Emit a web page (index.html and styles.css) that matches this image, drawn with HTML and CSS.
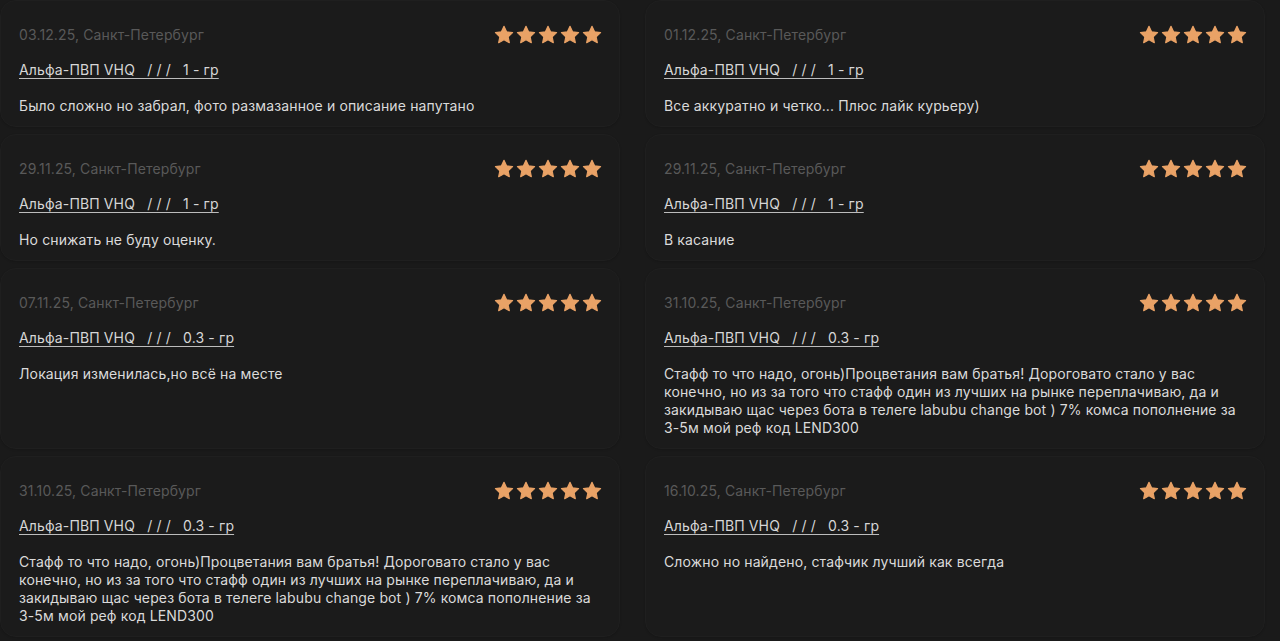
FILE: index.html
```html
<!DOCTYPE html>
<html lang="ru">
<head>
<meta charset="utf-8">
<link rel="stylesheet" href="styles.css">
<title>Отзывы</title>
</head>
<body>
<svg width="0" height="0" class="defs" aria-hidden="true">
  <defs>
    <symbol id="star" viewBox="0 0 24 24">
      <path d="M12 1.6l3.1 6.6 7.2.9-5.3 5 1.4 7.1L12 17.7l-6.4 3.5 1.4-7.1-5.3-5 7.2-.9z" fill="currentColor" stroke="currentColor" stroke-width="1.4" stroke-linejoin="round"/>
    </symbol>
  </defs>
</svg>
<main class="reviews">
  <article class="card">
    <div class="head"><span class="meta">03.12.25, Санкт-Петербург</span><span class="stars"><svg><use href="#star"/></svg><svg><use href="#star"/></svg><svg><use href="#star"/></svg><svg><use href="#star"/></svg><svg><use href="#star"/></svg></span></div>
    <a class="product" href="#">Альфа-ПВП VHQ   / / /   1 - гр</a>
    <p class="text">Было сложно но забрал, фото размазанное и описание напутано</p>
  </article>
  <article class="card">
    <div class="head"><span class="meta">01.12.25, Санкт-Петербург</span><span class="stars"><svg><use href="#star"/></svg><svg><use href="#star"/></svg><svg><use href="#star"/></svg><svg><use href="#star"/></svg><svg><use href="#star"/></svg></span></div>
    <a class="product" href="#">Альфа-ПВП VHQ   / / /   1 - гр</a>
    <p class="text">Все аккуратно и четко... Плюс лайк курьеру)</p>
  </article>
  <article class="card">
    <div class="head"><span class="meta">29.11.25, Санкт-Петербург</span><span class="stars"><svg><use href="#star"/></svg><svg><use href="#star"/></svg><svg><use href="#star"/></svg><svg><use href="#star"/></svg><svg><use href="#star"/></svg></span></div>
    <a class="product" href="#">Альфа-ПВП VHQ   / / /   1 - гр</a>
    <p class="text">Но снижать не буду оценку.</p>
  </article>
  <article class="card">
    <div class="head"><span class="meta">29.11.25, Санкт-Петербург</span><span class="stars"><svg><use href="#star"/></svg><svg><use href="#star"/></svg><svg><use href="#star"/></svg><svg><use href="#star"/></svg><svg><use href="#star"/></svg></span></div>
    <a class="product" href="#">Альфа-ПВП VHQ   / / /   1 - гр</a>
    <p class="text">В касание</p>
  </article>
  <article class="card">
    <div class="head"><span class="meta">07.11.25, Санкт-Петербург</span><span class="stars"><svg><use href="#star"/></svg><svg><use href="#star"/></svg><svg><use href="#star"/></svg><svg><use href="#star"/></svg><svg><use href="#star"/></svg></span></div>
    <a class="product" href="#">Альфа-ПВП VHQ   / / /   0.3 - гр</a>
    <p class="text">Локация изменилась,но всё на месте</p>
  </article>
  <article class="card">
    <div class="head"><span class="meta">31.10.25, Санкт-Петербург</span><span class="stars"><svg><use href="#star"/></svg><svg><use href="#star"/></svg><svg><use href="#star"/></svg><svg><use href="#star"/></svg><svg><use href="#star"/></svg></span></div>
    <a class="product" href="#">Альфа-ПВП VHQ   / / /   0.3 - гр</a>
    <p class="text">Стафф то что надо, огонь)Процветания вам братья! Дороговато стало у вас конечно, но из за того что стафф один из лучших на рынке переплачиваю, да и закидываю щас через бота в телеге labubu change bot ) 7% комса пополнение за 3-5м мой реф код LEND300</p>
  </article>
  <article class="card">
    <div class="head"><span class="meta">31.10.25, Санкт-Петербург</span><span class="stars"><svg><use href="#star"/></svg><svg><use href="#star"/></svg><svg><use href="#star"/></svg><svg><use href="#star"/></svg><svg><use href="#star"/></svg></span></div>
    <a class="product" href="#">Альфа-ПВП VHQ   / / /   0.3 - гр</a>
    <p class="text">Стафф то что надо, огонь)Процветания вам братья! Дороговато стало у вас конечно, но из за того что стафф один из лучших на рынке переплачиваю, да и закидываю щас через бота в телеге labubu change bot ) 7% комса пополнение за 3-5м мой реф код LEND300</p>
  </article>
  <article class="card">
    <div class="head"><span class="meta">16.10.25, Санкт-Петербург</span><span class="stars"><svg><use href="#star"/></svg><svg><use href="#star"/></svg><svg><use href="#star"/></svg><svg><use href="#star"/></svg><svg><use href="#star"/></svg></span></div>
    <a class="product" href="#">Альфа-ПВП VHQ   / / /   0.3 - гр</a>
    <p class="text">Сложно но найдено, стафчик лучший как всегда</p>
  </article>
</main>
</body>
</html>
```
FILE: styles.css
```css
html, body {
  margin: 0;
  padding: 0;
  background: #1a1a1a;
  height: 641px;
  overflow: hidden;
}

body {
  font-family: Inter, "Noto Sans", "DejaVu Sans", sans-serif;
  font-size: 14px;
  line-height: 18px;
  letter-spacing: 0.13px;
  color: #d9d9d9;
}

.defs {
  position: absolute;
  width: 0;
  height: 0;
}

.reviews {
  display: grid;
  grid-template-columns: 620px 620px;
  column-gap: 25px;
  row-gap: 7px;
}

.card {
  background: #1b1b1b;
  border: 1px solid #1f1f1f;
  border-radius: 16px;
  padding: 25px 17px 11px 18px;
  display: flex;
  flex-direction: column;
  align-items: flex-start;
  box-shadow: 0 1px 2px rgba(0, 0, 0, 0.15);
}

.head {
  align-self: stretch;
  display: flex;
  justify-content: space-between;
  align-items: center;
  height: 18px;
}

.meta {
  color: #595959;
}

.stars {
  display: flex;
  gap: 2px;
  color: #e9a266;
  letter-spacing: 0;
}

.stars svg {
  width: 20px;
  height: 20px;
}

.product {
  margin-top: 17px;
  color: #d6d6d6;
  text-decoration: underline;
  text-decoration-color: #bdbdbd;
  text-underline-offset: 3px;
  text-decoration-thickness: 1px;
  white-space: pre;
}

.text {
  margin: 18px 0 0;
  color: #dadada;
  max-width: 584px;
}
```
